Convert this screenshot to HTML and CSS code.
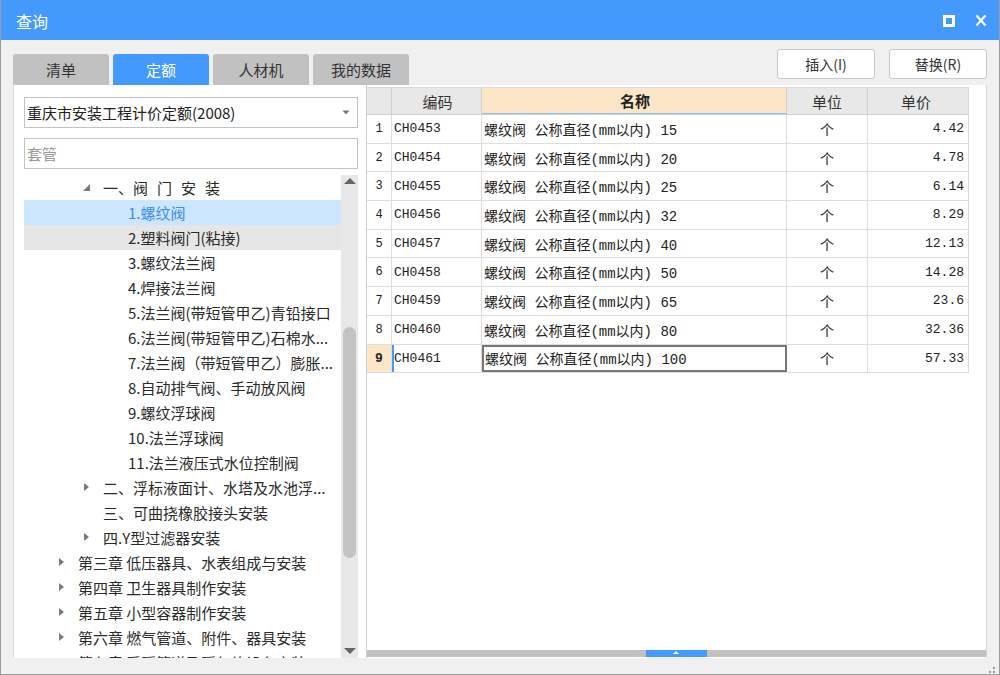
FILE: index.html
```html
<!DOCTYPE html>
<html lang="zh">
<head>
<meta charset="utf-8">
<title>查询</title>
<link rel="stylesheet" href="styles.css">
</head>
<body>
<div class="window">
  <div class="titlebar">
    <span class="title">查询</span>
    <div class="win-ctrls">
      <svg class="ic-max" width="12" height="12" viewBox="0 0 12 12"><rect x="1.5" y="1.5" width="9" height="9" fill="none" stroke="#fff" stroke-width="3"/></svg>
      <svg class="ic-close" width="12" height="13" viewBox="0 0 12 13"><path d="M1.5 1.5 L10.5 11.5 M10.5 1.5 L1.5 11.5" stroke="#fff" stroke-width="2.2" fill="none"/></svg>
    </div>
  </div>
  <div class="content">
    <div class="toolbar">
      <div class="tabs">
        <div class="tab">清单</div>
        <div class="tab active">定额</div>
        <div class="tab">人材机</div>
        <div class="tab">我的数据</div>
      </div>
      <div class="buttons">
        <button class="btn">插入(I)</button>
        <button class="btn">替换(R)</button>
      </div>
    </div>
    <div class="panels">
      <div class="left-panel">
        <div class="select">
          <span>重庆市安装工程计价定额(2008)</span>
          <svg width="8" height="5" viewBox="0 0 8 5"><path d="M0.5 0.5 L7.5 0.5 L4 4.5 Z" fill="#777"/></svg>
        </div>
        <div class="search">套管</div>
        <div class="tree-wrap">
          <div class="tree">
            <div class="node l2"><span class="arr arr-d"></span><span>一、<span class="spaced">阀门安</span>装</span></div>
            <div class="node l3 selected">1.螺纹阀</div>
            <div class="node l3 hover">2.塑料阀门(粘接)</div>
            <div class="node l3">3.螺纹法兰阀</div>
            <div class="node l3">4.焊接法兰阀</div>
            <div class="node l3">5.法兰阀(带短管甲乙)青铅接口</div>
            <div class="node l3">6.法兰阀(带短管甲乙)石棉水...</div>
            <div class="node l3">7.法兰阀（带短管甲乙）膨胀...</div>
            <div class="node l3">8.自动排气阀、手动放风阀</div>
            <div class="node l3">9.螺纹浮球阀</div>
            <div class="node l3">10.法兰浮球阀</div>
            <div class="node l3">11.法兰液压式水位控制阀</div>
            <div class="node l2"><span class="arr arr-r"></span><span>二、浮标液面计、水塔及水池浮...</span></div>
            <div class="node l2"><span class="arr"></span><span>三、可曲挠橡胶接头安装</span></div>
            <div class="node l2"><span class="arr arr-r"></span><span>四.Y型过滤器安装</span></div>
            <div class="node l1"><span class="arr arr-r"></span><span>第三章 低压器具、水表组成与安装</span></div>
            <div class="node l1"><span class="arr arr-r"></span><span>第四章 卫生器具制作安装</span></div>
            <div class="node l1"><span class="arr arr-r"></span><span>第五章 小型容器制作安装</span></div>
            <div class="node l1"><span class="arr arr-r"></span><span>第六章 燃气管道、附件、器具安装</span></div>
            <div class="node l1"><span class="arr arr-r"></span><span>第七章 采暖管道及暖气片设备安装</span></div>
          </div>
          <div class="vscroll">
            <span class="sb-up"></span>
            <div class="track"><div class="thumb"></div></div>
            <span class="sb-down"></span>
          </div>
        </div>
      </div>
      <div class="right-panel">
        <div class="grid">
          <div class="row head">
            <div class="c rn"></div>
            <div class="c code">编码</div>
            <div class="c name sel">名称</div>
            <div class="c unit">单位</div>
            <div class="c price">单价</div>
          </div>
          <div class="row"><div class="c rn">1</div><div class="c code">CH0453</div><div class="c name">螺纹阀 公称直径(mm以内) 15</div><div class="c unit">个</div><div class="c price">4.42</div></div>
          <div class="row"><div class="c rn">2</div><div class="c code">CH0454</div><div class="c name">螺纹阀 公称直径(mm以内) 20</div><div class="c unit">个</div><div class="c price">4.78</div></div>
          <div class="row"><div class="c rn">3</div><div class="c code">CH0455</div><div class="c name">螺纹阀 公称直径(mm以内) 25</div><div class="c unit">个</div><div class="c price">6.14</div></div>
          <div class="row"><div class="c rn">4</div><div class="c code">CH0456</div><div class="c name">螺纹阀 公称直径(mm以内) 32</div><div class="c unit">个</div><div class="c price">8.29</div></div>
          <div class="row"><div class="c rn">5</div><div class="c code">CH0457</div><div class="c name">螺纹阀 公称直径(mm以内) 40</div><div class="c unit">个</div><div class="c price">12.13</div></div>
          <div class="row"><div class="c rn">6</div><div class="c code">CH0458</div><div class="c name">螺纹阀 公称直径(mm以内) 50</div><div class="c unit">个</div><div class="c price">14.28</div></div>
          <div class="row"><div class="c rn">7</div><div class="c code">CH0459</div><div class="c name">螺纹阀 公称直径(mm以内) 65</div><div class="c unit">个</div><div class="c price">23.6</div></div>
          <div class="row"><div class="c rn">8</div><div class="c code">CH0460</div><div class="c name">螺纹阀 公称直径(mm以内) 80</div><div class="c unit">个</div><div class="c price">32.36</div></div>
          <div class="row cur"><div class="c rn">9</div><div class="c code">CH0461</div><div class="c name">螺纹阀 公称直径(mm以内) 100</div><div class="c unit">个</div><div class="c price">57.33</div></div>
        </div>
        <div class="fill"></div>
        <div class="hscroll"><div class="hthumb"><span class="tri"></span></div></div>
      </div>
    </div>
  </div>
  <div class="grip">
    <svg width="12" height="12" viewBox="0 0 12 12" fill="#999">
      <rect x="9" y="1" width="2" height="2"/>
      <rect x="5" y="5" width="2" height="2"/><rect x="9" y="5" width="2" height="2"/>
      <rect x="1" y="9" width="2" height="2"/><rect x="5" y="9" width="2" height="2"/><rect x="9" y="9" width="2" height="2"/>
    </svg>
  </div>
</div>
</body>
</html>
```

FILE: styles.css
```css
* { box-sizing: border-box; }
html, body { margin: 0; padding: 0; }
body {
  font-family: "Noto Sans CJK SC", "Noto Sans", sans-serif;
  color: #333;
  background: #fff;
}
.window {
  position: relative;
  width: 1000px;
  height: 675px;
  border: 1px solid #9c9c9c;
  border-top-color: #4a9af5;
  background: #f0f0f0;
  display: flex;
  flex-direction: column;
}
.titlebar {
  height: 39px;
  background: #4499fd;
  display: flex;
  align-items: center;
  justify-content: space-between;
  padding: 0 12px 0 15px;
  flex: none;
}
.title {
  color: #fff;
  font-size: 16px;
  line-height: 20px;
  margin-top: 1px;
}
.win-ctrls { display: flex; align-items: center; gap: 20px; }
.ic-max { margin-top: 1px; }
.content {
  flex: 1;
  display: flex;
  flex-direction: column;
  padding: 9px 12px 16px 12px;
  min-height: 0;
}
.toolbar {
  display: flex;
  justify-content: space-between;
  height: 36px;
  flex: none;
}
.tabs { display: flex; align-items: flex-end; gap: 4px; }
.tab {
  width: 96px;
  height: 31px;
  background: #c1c1c1;
  border-radius: 3px 3px 0 0;
  font-size: 15px;
  line-height: 31px;
  text-align: center;
  color: #333;
}
.tab.active { background: #4499fd; color: #fff; }
.buttons { display: flex; gap: 14px; align-items: flex-start; }
.btn {
  width: 98px;
  height: 30px;
  background: #fff;
  border: 1px solid #c9c9c9;
  border-radius: 3px;
  font-family: "Noto Sans CJK SC", sans-serif;
  font-size: 14px;
  color: #333;
  padding: 0;
}
.panels {
  flex: 1;
  display: flex;
  min-height: 0;
}
.left-panel {
  width: 353px;
  background: #fff;
  border-left: 1px solid #dcdcdc;
  padding: 12px 8px 0 10px;
  display: flex;
  flex-direction: column;
}
.select {
  height: 31px;
  border: 1px solid #c2c2c2;
  display: flex;
  align-items: center;
  justify-content: space-between;
  padding: 0 7px 0 2px;
  font-size: 15px;
  color: #222;
  flex: none;
}
.search {
  margin-top: 10px;
  height: 31px;
  border: 1px solid #c2c2c2;
  padding-left: 2px;
  font-size: 15px;
  line-height: 29px;
  color: #999;
  flex: none;
}
.tree-wrap {
  margin-top: 6px;
  flex: 1;
  display: flex;
  min-height: 0;
  overflow: hidden;
}
.tree {
  flex: 1;
  overflow: hidden;
}
.node {
  height: 25px;
  line-height: 25px;
  font-size: 15px;
  color: #2a2a2a;
  white-space: nowrap;
  display: flex;
  align-items: center;
}
.node.l1 { padding-left: 31px; }
.node.l2 { padding-left: 56px; }
.node.l3 { padding-left: 104px; }
.node.selected { background: #cce6ff; color: #3c8de8; }
.node.hover { background: #e6e6e6; }
.arr { width: 23px; height: 25px; position: relative; flex: none; }
.arr-r::before {
  content: "";
  position: absolute;
  left: 4px; top: 8px;
  border-left: 5px solid #7a7a7a;
  border-top: 4px solid transparent;
  border-bottom: 4px solid transparent;
}
.arr-d::before {
  content: "";
  position: absolute;
  left: 3px; top: 9px;
  border-right: 7px solid #7a7a7a;
  border-top: 7px solid transparent;
}
.spaced { letter-spacing: 9px; }
.vscroll {
  width: 17px;
  background: #e8e8e8;
  display: flex;
  flex-direction: column;
  align-items: center;
  flex: none;
}
.sb-up, .sb-down { height: 14px; width: 17px; position: relative; flex: none; }
.sb-up::before {
  content: ""; position: absolute; left: 3px; top: 3px;
  border-bottom: 6px solid #666;
  border-left: 6px solid transparent; border-right: 6px solid transparent;
}
.sb-down::before {
  content: ""; position: absolute; left: 3px; top: 4px;
  border-top: 6px solid #666;
  border-left: 6px solid transparent; border-right: 6px solid transparent;
}
.vscroll .track { flex: 1; width: 17px; padding: 138px 2px 0 2px; }
.vscroll .thumb { height: 231px; background: #c3c3c3; border-radius: 7px; }
.right-panel {
  width: 621px;
  background: #fff;
  border-left: 1px solid #cfcfcf;
  border-right: 1px solid #d6d6d6;
  display: flex;
  flex-direction: column;
  padding-top: 2px;
}
.grid { width: 602px; border-right: 1px solid #dadada; }
.row { display: flex; height: 28.7px; border-bottom: 1px solid #dedede; }
.row.head { height: 28px; background: #e8e8e8; border-top: 1px solid #d8d8d8; border-bottom: 1px solid #d0d0d0; }
.c {
  border-right: 1px solid #dedede;
  font-family: "Liberation Mono", "Noto Sans CJK SC", monospace;
  font-size: 13px;
  color: #222;
  display: flex;
  align-items: center;
  overflow: hidden;
  white-space: nowrap;
}
.row.head .c {
  font-family: "Noto Sans CJK SC", sans-serif;
  font-size: 15px;
  justify-content: center;
  border-right-color: #d0d0d0;
  color: #333;
}
.row.head .c.sel { background: #fde6c8; font-weight: bold; border-bottom: 1px solid #8fc0f0; color: #222; }
.rn { width: 25px; justify-content: center; font-size: 12px; }
.code { width: 90px; padding-left: 2px; }
.name { width: 305px; padding-left: 2px; font-size: 14px; }
.unit { width: 81px; justify-content: center; font-family: "Noto Sans CJK SC", sans-serif; font-size: 14px; }
.price { width: 100px; justify-content: flex-end; padding-right: 4px; border-right: none; }
.row.cur .rn { background: #fde6c8; font-weight: bold; font-size: 13px; }
.row.cur .code { border-left: 2px solid #4499fd; padding-left: 0; width: 90px; }
.row.cur .name { border: 2px solid #777; padding-left: 1px; }
.fill { flex: 1; }
.hscroll {
  height: 7px;
  background: #c1c1c1;
  margin-bottom: 1px;
  padding-left: 279px;
  flex: none;
}
.hthumb {
  width: 61px;
  height: 7px;
  background: #4499fd;
  position: relative;
}
.hthumb .tri {
  position: absolute; left: 27px; top: 1px;
  border-bottom: 3px solid #fff;
  border-left: 3px solid transparent; border-right: 3px solid transparent;
}
.grip { position: absolute; right: 3px; bottom: 3px; width: 12px; height: 12px; }
```
